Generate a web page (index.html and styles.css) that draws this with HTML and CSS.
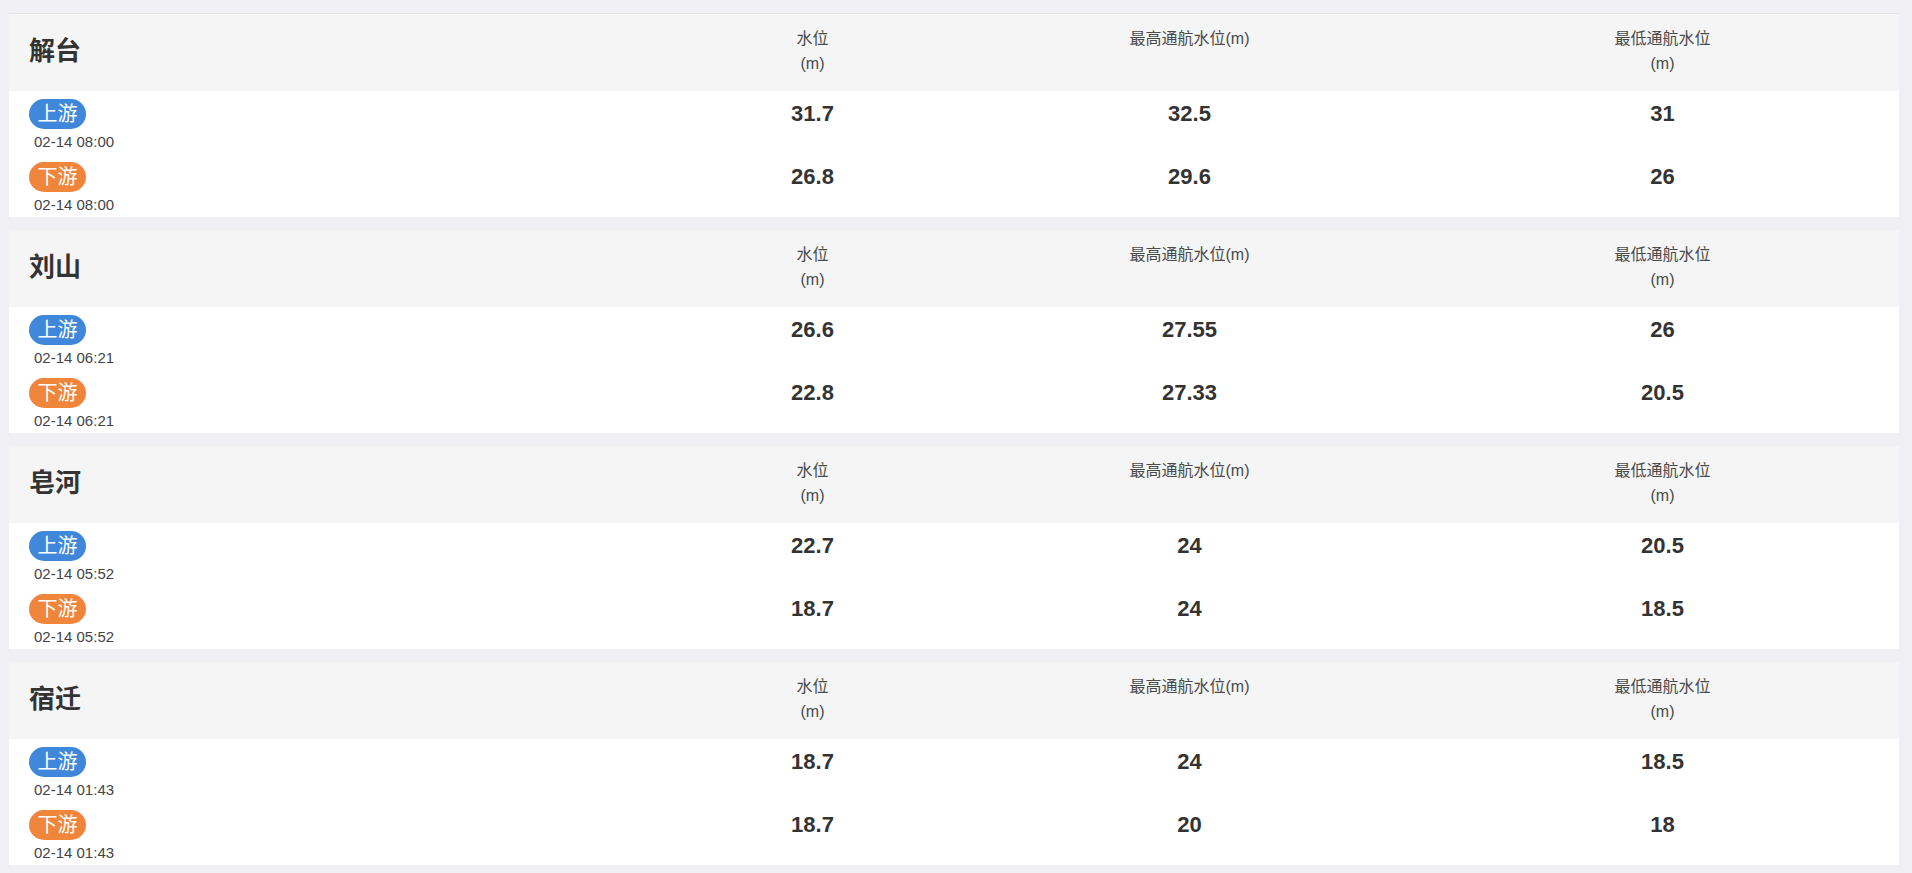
FILE: index.html
```html
<!DOCTYPE html>
<html lang="zh-CN">
<head>
<meta charset="utf-8">
<title>水位</title>
<link rel="stylesheet" href="styles.css">
</head>
<body>
<div class="page">
  <section class="card first">
    <div class="head">
      <div class="name">解台</div>
      <div class="hcol">水位<br>(m)</div>
      <div class="hcol">最高通航水位(m)</div>
      <div class="hcol">最低通航水位<br>(m)</div>
    </div>
    <div class="row">
      <div class="loc"><span class="badge up">上游</span><div class="time">02-14 08:00</div></div>
      <div class="val">31.7</div><div class="val">32.5</div><div class="val">31</div>
    </div>
    <div class="row">
      <div class="loc"><span class="badge down">下游</span><div class="time">02-14 08:00</div></div>
      <div class="val">26.8</div><div class="val">29.6</div><div class="val">26</div>
    </div>
  </section>
  <section class="card">
    <div class="head">
      <div class="name">刘山</div>
      <div class="hcol">水位<br>(m)</div>
      <div class="hcol">最高通航水位(m)</div>
      <div class="hcol">最低通航水位<br>(m)</div>
    </div>
    <div class="row">
      <div class="loc"><span class="badge up">上游</span><div class="time">02-14 06:21</div></div>
      <div class="val">26.6</div><div class="val">27.55</div><div class="val">26</div>
    </div>
    <div class="row">
      <div class="loc"><span class="badge down">下游</span><div class="time">02-14 06:21</div></div>
      <div class="val">22.8</div><div class="val">27.33</div><div class="val">20.5</div>
    </div>
  </section>
  <section class="card">
    <div class="head">
      <div class="name">皂河</div>
      <div class="hcol">水位<br>(m)</div>
      <div class="hcol">最高通航水位(m)</div>
      <div class="hcol">最低通航水位<br>(m)</div>
    </div>
    <div class="row">
      <div class="loc"><span class="badge up">上游</span><div class="time">02-14 05:52</div></div>
      <div class="val">22.7</div><div class="val">24</div><div class="val">20.5</div>
    </div>
    <div class="row">
      <div class="loc"><span class="badge down">下游</span><div class="time">02-14 05:52</div></div>
      <div class="val">18.7</div><div class="val">24</div><div class="val">18.5</div>
    </div>
  </section>
  <section class="card">
    <div class="head">
      <div class="name">宿迁</div>
      <div class="hcol">水位<br>(m)</div>
      <div class="hcol">最高通航水位(m)</div>
      <div class="hcol">最低通航水位<br>(m)</div>
    </div>
    <div class="row">
      <div class="loc"><span class="badge up">上游</span><div class="time">02-14 01:43</div></div>
      <div class="val">18.7</div><div class="val">24</div><div class="val">18.5</div>
    </div>
    <div class="row">
      <div class="loc"><span class="badge down">下游</span><div class="time">02-14 01:43</div></div>
      <div class="val">18.7</div><div class="val">20</div><div class="val">18</div>
    </div>
  </section>
</div>
</body>
</html>
```
FILE: styles.css
```css
html, body {
  margin: 0;
  padding: 0;
  background: #efeff4;
  font-family: "Liberation Sans", "Noto Sans CJK SC", sans-serif;
  color: #333;
}
.page {
  padding: 13px 13px 0 9px;
  display: flex;
  flex-direction: column;
  gap: 13px;
}
.card {
  background: #fff;
}
.card.first {
  border-top: 1px solid #e2e2e7;
}
.head, .row {
  display: grid;
  grid-template-columns: 663px 281px 1fr 1fr;
}
.head {
  background: #f5f5f5;
  height: 77px;
  box-sizing: border-box;
  padding-top: 12px;
  align-items: start;
}
.name {
  align-self: center;
  margin-top: -20px;
  padding-left: 20px;
  font-size: 26px;
  font-weight: bold;
  color: #333;
}
.hcol {
  text-align: center;
  font-size: 16px;
  line-height: 25px;
  color: #4a4a4a;
}
.row {
  height: 63px;
  box-sizing: border-box;
  padding-top: 8px;
  align-items: start;
}
.loc {
  padding-left: 20px;
}
.badge {
  display: inline-block;
  height: 30px;
  line-height: 30px;
  padding: 0 8.5px;
  border-radius: 15px;
  color: #fff;
  font-size: 20px;
}
.badge.up { background: #3f87da; }
.badge.down { background: #f0853c; }
.time {
  margin-top: 2px;
  padding-left: 5px;
  font-size: 15px;
  line-height: 22px;
  color: #444;
}
.val {
  text-align: center;
  font-size: 22px;
  font-weight: bold;
  line-height: 30px;
  color: #333;
}
```
